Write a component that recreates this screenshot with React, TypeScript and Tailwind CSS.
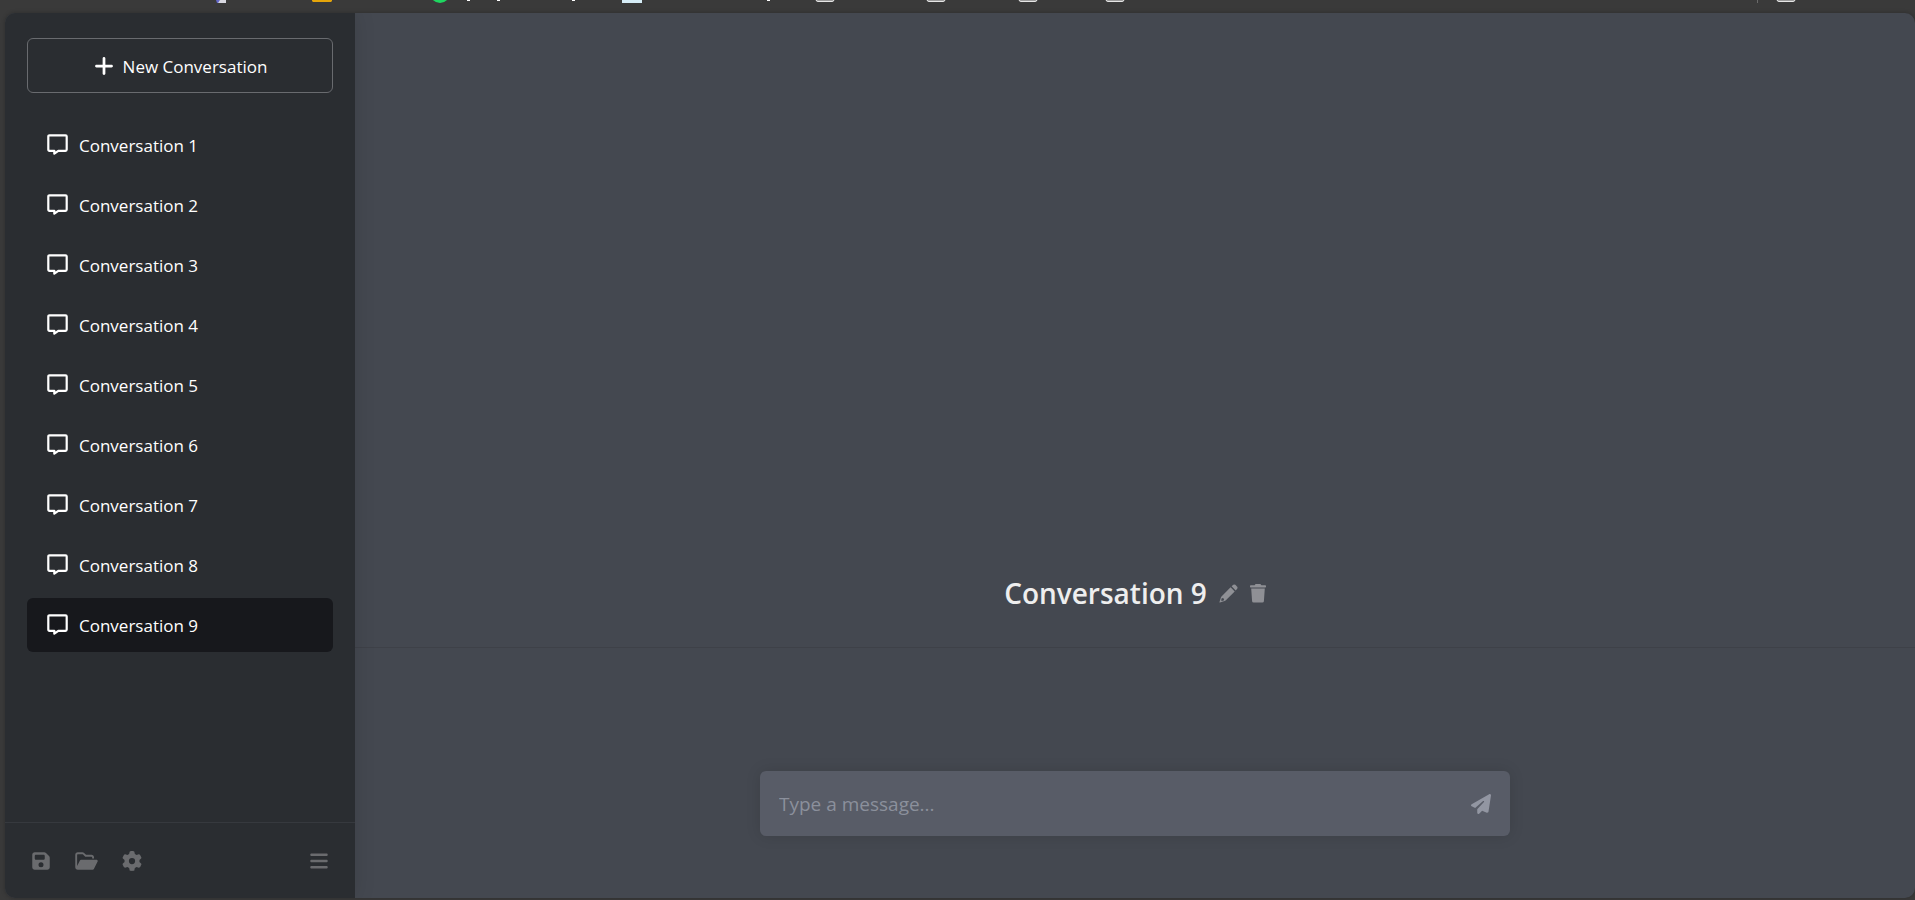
import { useState } from "react";
import { FaBars, FaFloppyDisk, FaGear, FaPaperPlane, FaPlus } from "react-icons/fa6";

const conversations = Array.from({ length: 9 }, (_, i) => `Conversation ${i + 1}`);
const folderEdges = [816, 927, 1019, 1106, 1777];
const letterTails = [467, 497, 572, 767];

function BookmarkStrip() {
  return (
    <div className="h-[13px] shrink-0 overflow-hidden" aria-hidden="true">
      <svg width="1910" height="4" viewBox="5 0 1910 4" className="block max-w-none">
        <path d="M216 0h6l-2 3h-3z" fill="#6468c8" />
        <path d="M220 0h6v3h-8z" fill="#d8d8e0" />
        <path d="M312 0h20v1l-1 1h-18l-1-1z" fill="#e5a50a" />
        <circle cx="440" cy="-7" r="10" fill="#1ed760" />
        <rect x="622" y="0" width="20" height="3" fill="#d6edf7" />
        {letterTails.map((x) => (
          <rect key={x} x={x} y="0" width="3" height="1" fill="#ffffff" />
        ))}
        {folderEdges.map((x) => (
          <path key={x} d={`M${x} -2v1.500q0 2 2 2h14q2 0 2-2v-1.500z`} fill="#9a9a9a" stroke="#e6e6e6" />
        ))}
        <rect x="1757" y="0" width="1" height="3" fill="#6a6a6a" />
      </svg>
    </div>
  );
}

function MessageIcon() {
  return (
    <svg viewBox="0 0 22 22" className="size-[22px] shrink-0" fill="none" aria-hidden="true">
      <path
        d="M2.500 1.300H18.500Q19.700 1.300 19.700 2.500V15.600Q19.700 16.800 18.500 16.800H11.300L7.300 19.700V16.800H2.500Q1.300 16.800 1.300 15.600V2.500Q1.300 1.300 2.500 1.300Z"
        stroke="currentColor"
        strokeWidth="2.2"
        strokeLinejoin="round"
      />
    </svg>
  );
}

function FolderOpenIcon() {
  return (
    <svg viewBox="0 0 576 512" className="h-5 w-[23px]" fill="currentColor" aria-hidden="true">
      <path d="M572.6 270.3l-96 192C471.2 473.2 460.1 480 447.1 480H64c-35.35 0-64-28.66-64-64V96c0-35.34 28.65-64 64-64h117.5c16.97 0 33.25 6.742 45.26 18.75L275.900 96H416c35.35 0 64 28.66 64 64v32h-48V160c0-8.824-7.178-16-16-16H256L192.800 84.690C189.800 81.660 185.800 80 181.500 80H64C55.180 80 48 87.180 48 96v288l71.160-142.300C124.600 230.800 135.700 224 147.800 224h396.200C567.700 224 583.200 249 572.600 270.300z" />
    </svg>
  );
}

function PencilIcon() {
  return (
    <svg viewBox="0 0 19 19" className="size-[19px]" fill="currentColor" aria-hidden="true">
      <path d="M12.600 2.300L14.300 0.800Q15.300 0 16.300 0.800L18.200 2.700Q19 3.700 18.200 4.700L16.700 6.400Z" />
      <path
        fillRule="evenodd"
        d="M11.600 3.300L15.700 7.400L6.600 16.500Q6.200 16.900 5.600 17.100L0.900 18.500Q0.300 18.600 0.500 18L1.900 13.400Q2.100 12.800 2.500 12.400ZM2.900 14L2.100 16.200L2.900 17L5 16.200L4.800 14.400Z"
      />
    </svg>
  );
}

function TrashIcon() {
  return (
    <svg viewBox="0 0 16 19" className="h-[19px] w-4" fill="currentColor" aria-hidden="true">
      <path d="M0.700 1.200H4.600L5.300 0.300Q5.500 0 5.900 0H10.100Q10.500 0 10.700 0.300L11.400 1.200H15.300Q16 1.200 16 1.900V2.700Q16 3.400 15.300 3.400H0.700Q0 3.400 0 2.700V1.900Q0 1.200 0.700 1.200Z" />
      <path d="M1.200 4.600H14.800L13.900 17.200Q13.800 18.600 12.400 18.600H3.600Q2.200 18.600 2.100 17.200Z" />
    </svg>
  );
}

export default function App() {
  const [active, setActive] = useState(8);
  const [message, setMessage] = useState("");

  return (
    <div className="flex h-screen flex-col bg-[#3a3a3a] pb-[2px] pl-[5px] font-['Open_Sans','Noto_Sans',sans-serif] text-white">
      <BookmarkStrip />
      <div className="flex min-h-0 flex-1 overflow-hidden rounded-[10px] bg-[#444850] shadow-[0_0_4px_rgba(0,0,0,0.25)]">
        <aside className="z-10 flex w-[350px] shrink-0 flex-col bg-[#2a2d31] shadow-[0_0_20px_rgba(0,0,0,0.12)]">
          <div className="flex min-h-0 flex-1 flex-col overflow-hidden px-[22px] pt-[25px]">
            <button
              type="button"
              className="flex h-[55px] shrink-0 items-center justify-center gap-2 rounded-md border border-[#696b6f] text-[17px]"
            >
              <FaPlus className="size-[22px]" />
              <span className="pt-[2px]">New Conversation</span>
            </button>
            <nav className="mt-[25px] flex flex-col gap-[6px]" aria-label="Conversations">
              {conversations.map((name, i) => (
                <button
                  key={name}
                  type="button"
                  onClick={() => setActive(i)}
                  className={`flex h-[54px] items-center gap-[10px] rounded-md px-5 text-[17px] ${
                    i === active ? "bg-[#17181c]" : ""
                  }`}
                >
                  <MessageIcon />
                  <span className="pt-[2px]">{name}</span>
                </button>
              ))}
            </nav>
          </div>
          <div className="flex h-[76px] shrink-0 items-center border-t border-[#36393e] px-[26px] text-[#6a6b6e]">
            <div className="flex flex-1 items-center gap-6">
              <button type="button" aria-label="Save">
                <FaFloppyDisk className="size-5" />
              </button>
              <button type="button" aria-label="Open">
                <FolderOpenIcon />
              </button>
              <button type="button" aria-label="Settings">
                <FaGear className="size-5" />
              </button>
            </div>
            <button type="button" aria-label="Menu">
              <FaBars className="size-5" />
            </button>
          </div>
        </aside>
        <main className="flex min-w-0 flex-1 flex-col justify-end">
          <header className="flex items-center justify-center gap-3 border-b border-[#3e4148] pb-8 text-[#8f9095]">
            <h1 className="text-[28px] leading-[44px] font-semibold text-[#eeeeee]">{conversations[active]}</h1>
            <button type="button" aria-label="Rename">
              <PencilIcon />
            </button>
            <button type="button" aria-label="Delete">
              <TrashIcon />
            </button>
          </header>
          <form
            onSubmit={(e) => e.preventDefault()}
            className="mx-auto mt-[123px] mb-[62px] flex h-[65px] w-full max-w-[750px] items-center rounded-md bg-[#585c67] px-[19px] shadow-[0_0_15px_rgba(0,0,0,0.12)]"
          >
            <input
              type="text"
              aria-label="Message"
              placeholder="Type a message..."
              value={message}
              onChange={(e) => setMessage(e.target.value)}
              className="min-w-0 flex-1 bg-transparent pt-[2px] text-[19px] outline-none placeholder:text-[#8b909c]"
            />
            <button type="submit" aria-label="Send" className="text-[#9296a2]">
              <FaPaperPlane className="size-5" />
            </button>
          </form>
        </main>
      </div>
    </div>
  );
}
